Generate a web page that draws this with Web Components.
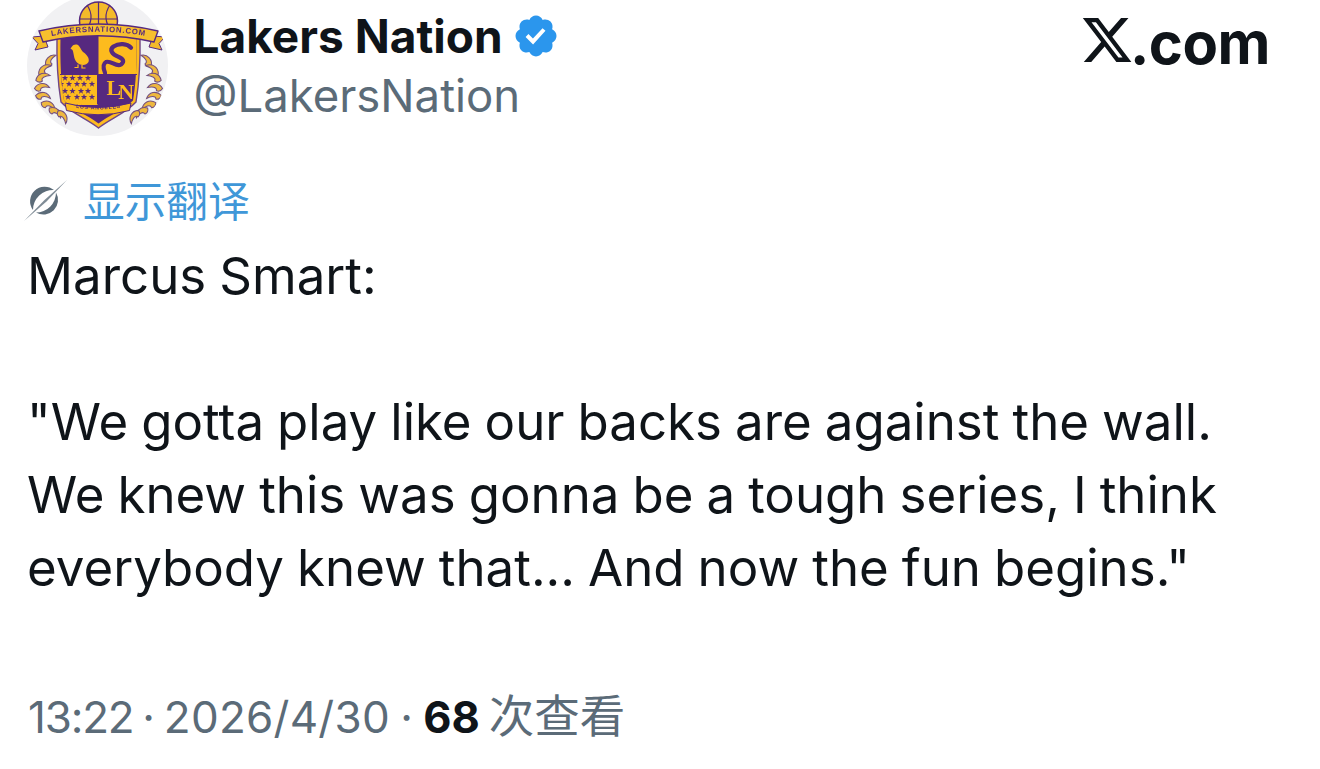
<!DOCTYPE html>
<html lang="en">
<head>
<meta charset="utf-8">
<title>Lakers Nation</title>
<style>
  html, body { margin: 0; background: #fff; }
  body { width: 1320px; height: 769px; overflow: hidden; font-family: Inter, "Noto Sans CJK SC", sans-serif; color: #0f1419; }
</style>
</head>
<body>
<tweet-card>
  <tweet-author slot="author" name="Lakers Nation" handle="@LakersNation"></tweet-author>
  <translate-link slot="translate">显示翻译</translate-link>
  <tweet-body slot="body">Marcus Smart:<br><br>"We gotta play like our backs are against the wall.<br>We knew this was gonna be a tough series, I think<br>everybody knew that... And now the fun begins."</tweet-body>
  <tweet-meta slot="meta" time="13:22" date="2026/4/30" views="68"></tweet-meta>
</tweet-card>

<script>
const cjk = '"Noto Sans CJK SC", sans-serif';

class TweetCard extends HTMLElement {
  connectedCallback() {
    this.attachShadow({ mode: "open" }).innerHTML = `
<style>
  :host { display: flex; flex-direction: column; padding: 0 28px; box-sizing: border-box; width: 1320px; height: 769px; }
</style>
<slot name="author"></slot>
<slot name="translate"></slot>
<slot name="body"></slot>
<slot name="meta"></slot>`;
  }
}

class AvatarLogo extends HTMLElement {
  connectedCallback() {
    const purple = "#56297f", gold = "#fdbb1e";
    let stars = "";
    [[78, [65, 72.500, 80, 88]], [84, [61, 69, 77, 84, 92]], [91, [65, 72.500, 81, 88]], [97, [68, 77, 84, 92]]].forEach(([y, xs]) => {
      xs.forEach(x => { stars += `<use href="#st" x="${x}" y="${y}"/>`; });
    });
    // crescent leaves of the laurel, mirrored round the shield's centre line
    const leaf = (x, y, r) => `<path transform="translate(${x} ${y}) rotate(${r}) scale(1.15)" d="M-6.500 1C-4-5 3-5.500 6.500-1C3-1.500-2-1-1 2.500C-3 3.500-5 3-6.500 1Z" fill="#eeb83f" stroke="#74507f" stroke-width=".9"/>`;
    const leaves = [[51, 61, -40], [45, 70, -25], [43, 78, -10], [42, 88, 5], [43, 97, 20], [48, 106, 35], [55, 113, 50], [62, 117, 70]];
    let laurel = "";
    leaves.forEach(([x, y, r]) => {
      laurel += leaf(x, y, r) + `<g transform="translate(197 0) scale(-1 1)">${leaf(x, y, r)}</g>`;
    });
    const outer = "M57 36H140C140.500 62 139 84 136 102C126 113 110 119 98.500 128C87 119 71 113 61 102C58 84 56.500 62 57 36Z";
    const inner = "M60.500 36H136.500C137 62 136 84 133 100.500C123 110 108 116 98.500 123.500C89 116 74 110 64 100.500C61 84 60 62 60.500 36Z";
    this.attachShadow({ mode: "open" }).innerHTML = `
<style>
  :host { display: block; flex: none; width: 141px; height: 141px; margin: -5px 0 0 -1px; border-radius: 50%; background: #f1f1f3; overflow: hidden; }
  svg { display: block; filter: blur(.35px); }
  text { font-family: "Liberation Sans", sans-serif; font-weight: 700; }
  .serif { font-family: "Liberation Serif", serif; }
</style>
<svg width="141" height="141" viewBox="27 -5 141 141">
  <defs>
    <polygon id="st" points="0,-3.200 .85,-1 3.200,-1 1.300,.4 2,2.700 0,1.300 -2,2.700 -1.300,.4 -3.200,-1 -.85,-1" fill="${purple}"/>
    <clipPath id="sh"><path d="${inner}"/></clipPath>
    <path id="arc" d="M44 37.500Q98 26 153 37.500"/>
    <path id="arc2" d="M67 106Q98 113 130 106"/>
  </defs>
  ${laurel}
  <circle cx="98.500" cy="21" r="19" fill="#f4ba2a" stroke="${purple}" stroke-width="1.500"/>
  <path d="M98.500 2V38M79.500 19H117.500M87 5Q96 18 85 32M110 5Q101 18 112 32" fill="none" stroke="${purple}" stroke-width="1.200"/>
  <path d="${outer}" fill="${gold}" stroke="#6f4688" stroke-width="1.400"/>
  <path d="${inner}" fill="${purple}"/>
  <g clip-path="url(#sh)">
    <rect x="98.500" y="36" width="42" height="38" fill="${gold}"/>
    <rect x="58" y="75" width="39.500" height="30" fill="${gold}"/>
    ${stars}
  </g>
  <path d="M97.500 38V104M60 74.500H137" stroke="${purple}" stroke-width="1"/>
  <path d="M70.500 48.500L72 46.500C73 44.500 77 43.500 79 46C81 48.500 81 50 83 52C86 54 90 58 88.500 62C86 66.500 79.500 65.500 76.500 62C73.500 58.500 74 53 72.500 50Z" fill="${gold}"/>
  <path d="M78 64.500V67.500H74.500M82 65V68H85.500" fill="none" stroke="${gold}" stroke-width="1.200"/>
  <path d="M131 47.700C127 43.500 119 43 113.500 46.500C109 50 112 54.500 118.300 56.700C123 58.500 125 61.500 121 64.500C116 67.500 111 60 106 62C102.500 64 103.500 69 105 72.700" fill="none" stroke="${purple}" stroke-width="4.200" stroke-linecap="round"/>
  <path d="M44 36L32 37L38 43.500L35 50L48 47Z M153 36L165 37L159 43.500L162 50L149 47Z" fill="#f4ba2a" stroke="${purple}" stroke-width="1"/>
  <path d="M39 31Q98 17 158 31L154 42Q98 29.500 43 42Z" fill="#f7bf2e" stroke="${purple}" stroke-width="1.400"/>
  <text font-size="7.800" fill="${purple}" letter-spacing=".8"><textPath href="#arc" startOffset="50%" text-anchor="middle">LAKERSNATION.COM</textPath></text>
  <path d="M65 103Q98 112 131 103L129.500 110.500Q98 119 66.500 110.500Z" fill="${gold}" stroke="${purple}" stroke-width="1"/>
  <text font-size="5.200" fill="${purple}" letter-spacing=".75"><textPath href="#arc2" startOffset="50%" text-anchor="middle">LOS ANGELES</textPath></text>
  <text class="serif" x="106.500" y="95" dx="0 -3" dy="0 4" font-size="22" fill="${gold}">LN</text>
</svg>`;
  }
}

class VerifiedBadge extends HTMLElement {
  connectedCallback() {
    this.attachShadow({ mode: "open" }).innerHTML = `
<style>:host { display: block; flex: none; width: 48px; height: 48px; } svg { display: block; }</style>
<svg width="48" height="48" viewBox="0 0 24 24"><path fill="#2b96ed" d="M22.25 12c0-1.43-.88-2.67-2.19-3.34.46-1.39.2-2.9-.81-3.91s-2.52-1.27-3.91-.81c-.66-1.31-1.91-2.19-3.34-2.19s-2.67.88-3.33 2.19c-1.4-.46-2.91-.2-3.92.81s-1.26 2.52-.8 3.91c-1.31.67-2.2 1.91-2.2 3.34s.89 2.67 2.2 3.34c-.46 1.39-.21 2.9.8 3.91s2.52 1.26 3.91.81c.67 1.31 1.91 2.19 3.34 2.19s2.68-.88 3.34-2.19c1.39.45 2.9.2 3.91-.81s1.27-2.52.81-3.91c1.31-.67 2.19-1.91 2.19-3.34zm-11.71 4.2L6.8 12.46l1.41-1.42 2.26 2.26 4.8-5.23 1.47 1.36-6.2 6.77z"/></svg>`;
  }
}

class XWordmark extends HTMLElement {
  connectedCallback() {
    this.attachShadow({ mode: "open" }).innerHTML = `
<style>
  :host { display: flex; align-items: center; margin-left: auto; margin-right: 22px; margin-top: 13px; height: 54px; font: 700 58px/54px Inter, sans-serif; color: #0f1419; letter-spacing: -.5px; }
  svg { display: block; flex: none; margin-right: -4px; }
  span { padding-top: 6px; }
</style>
<svg width="54" height="54" viewBox="0 0 24 24"><path fill="#0f1419" d="M18.244 2.25h3.308l-7.227 8.26 8.502 11.24H16.17l-5.214-6.817L4.99 21.75H1.68l7.73-8.835L1.254 2.25H8.08l4.713 6.231zm-1.161 17.52h1.833L7.084 4.126H5.117z"/></svg><span>.com</span>`;
  }
}

class TweetAuthor extends HTMLElement {
  connectedCallback() {
    this.attachShadow({ mode: "open" }).innerHTML = `
<style>
  :host { display: flex; align-items: flex-start; height: 130px; }
  .who { margin-left: 25.500px; }
  .name { display: flex; align-items: center; height: 48px; margin-top: 12px; font: 700 46px/48px Inter, sans-serif; color: #0f1419; }
  .name verified-badge { margin-left: 9.500px; }
  .handle { margin-top: 12px; font: 400 45.500px/48px Inter, sans-serif; color: #5b6b78; }
</style>
<avatar-logo></avatar-logo>
<div class="who">
  <div class="name"><span>${this.getAttribute("name")}</span><verified-badge></verified-badge></div>
  <div class="handle">${this.getAttribute("handle")}</div>
</div>
<x-wordmark></x-wordmark>`;
  }
}

class TranslateLink extends HTMLElement {
  connectedCallback() {
    this.attachShadow({ mode: "open" }).innerHTML = `
<style>
  :host { display: flex; align-items: center; height: 44px; margin-top: 47px; font: 400 41.700px/44px ${cjk}; color: #3f97d8; }
  svg { display: block; flex: none; margin: 2px 15px 0 -4px; }
</style>
<svg width="44" height="42" viewBox="24 179 44 42" fill="none">
  <path fill="#5b6b78" d="M54 190A14.600 14.600 0 0 0 33 210A20 20 0 0 1 54 190Z"/>
  <path fill="#5b6b78" d="M36 212.500A14.600 14.600 0 0 0 56 192.500A20 20 0 0 1 36 212.500Z"/>
  <path d="M24 221L44.500 200L67 180L46.500 201.500Z" fill="#7f8c96"/>
</svg>
<slot></slot>`;
  }
}

class TweetBody extends HTMLElement {
  connectedCallback() {
    this.attachShadow({ mode: "open" }).innerHTML = `
<style>
  :host { display: block; margin: 18px 0 0 -1px; font: 400 51px/73px Inter, sans-serif; word-spacing: -1.300px; color: #0f1419; white-space: nowrap; }
</style>
<slot></slot>`;
  }
}

class TweetMeta extends HTMLElement {
  connectedCallback() {
    this.attachShadow({ mode: "open" }).innerHTML = `
<style>
  :host { display: block; margin-top: 85px; font: 400 44px/56px Inter, ${cjk}; word-spacing: -3.500px; color: #5b6b78; white-space: nowrap; }
  .time { letter-spacing: -1.200px; }
  .date { letter-spacing: .25px; }
  .sep { margin: 0 1.500px; }
  .zh { font-size: 45.500px; }
  b { font-weight: 700; font-size: 43.500px; color: #0f1419; }
</style>
<span class="time">${this.getAttribute("time")}</span> · <span class="date">${this.getAttribute("date")}</span> <span class="sep">·</span> <b>${this.getAttribute("views")}</b> <span class="zh">次查看</span>`;
  }
}

customElements.define("tweet-card", TweetCard);
customElements.define("avatar-logo", AvatarLogo);
customElements.define("verified-badge", VerifiedBadge);
customElements.define("x-wordmark", XWordmark);
customElements.define("tweet-author", TweetAuthor);
customElements.define("translate-link", TranslateLink);
customElements.define("tweet-body", TweetBody);
customElements.define("tweet-meta", TweetMeta);
</script>
</body>
</html>
